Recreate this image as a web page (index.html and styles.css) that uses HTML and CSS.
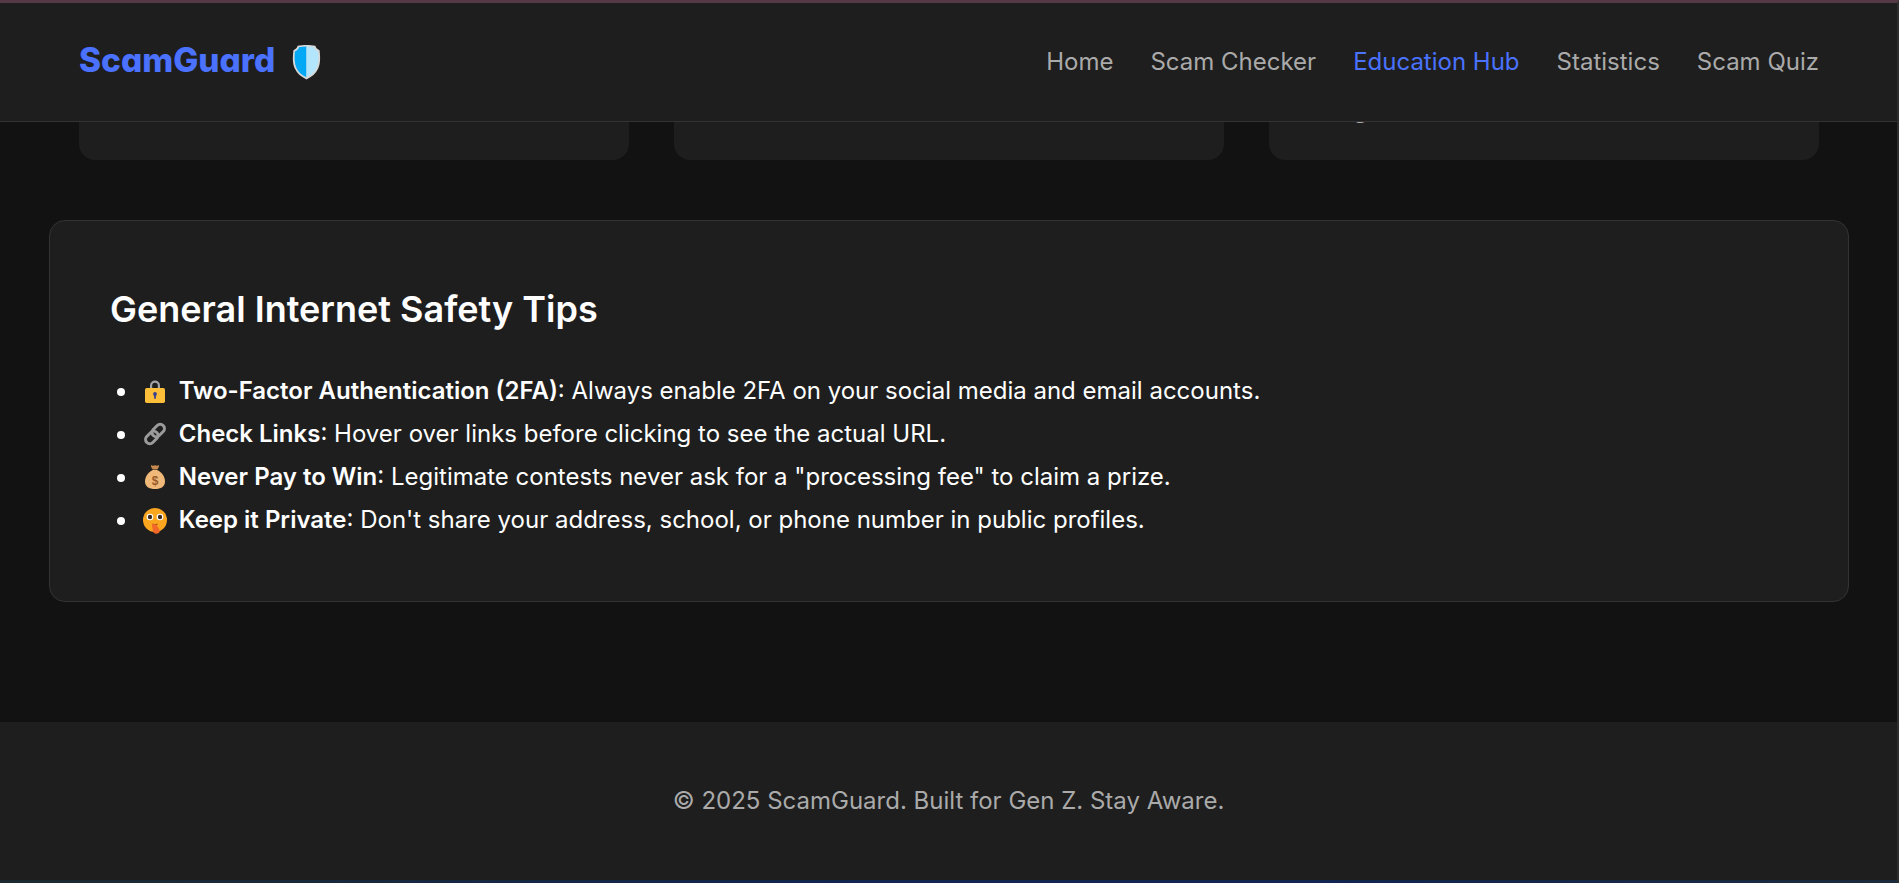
FILE: index.html
```html
<!DOCTYPE html>
<html lang="en">
  <head>
    <meta charset="UTF-8" />
    <meta name="viewport" content="width=device-width, initial-scale=1.0" />
    <title>ScamGuard - Education Hub</title>
    <link rel="stylesheet" href="styles.css">
  </head>

  <body>
    <header class="site-header">
      <div class="logo">
        <span class="logo-text">ScamGuard</span>
        <svg class="logo-shield" viewBox="0 0 30 36">
          <path d="M15 .3c3.200 0 6.500 .4 9.200 1 .3 2 1.800 3.600 4.300 4.500 1 8 .9 14-1.400 19C24.800 30 20.500 33.500 15 36 9.500 33.500 5.200 30 2.900 24.800.6 19.800 .5 13.800 1.500 5.800 4 4.900 5.500 3.300 5.800 1.300c2.700-.6 6-1 9.200-1z" fill="#d8d8d8"/>
          <path d="M15 2c-2.800 0-5.500 .3-7.800 .8C6.700 4.900 5.200 6.300 3 7.100 2.300 14 2.600 19.700 4.600 24.100 6.600 28.400 10.200 31.500 15 33.800z" fill="#03a9f4"/>
          <path d="M15 2c2.800 0 5.500 .3 7.800 .8 .5 2.100 2 3.500 4.200 4.300 .7 6.900 .4 12.600-1.600 17-2 4.300-5.600 7.400-10.400 9.700z" fill="#b3e5fc"/>
        </svg>
      </div>
      <nav class="site-nav">
        <a href="#">Home</a>
        <a href="#">Scam Checker</a>
        <a href="#" class="active">Education Hub</a>
        <a href="#">Statistics</a>
        <a href="#">Scam Quiz</a>
      </nav>
    </header>

    <main>
      <div class="card-row">
        <div class="topic-card"></div>
        <div class="topic-card"></div>
        <div class="topic-card"><p class="topic-text">g</p></div>
      </div>

      <section class="tips">
        <h2>General Internet Safety Tips</h2>
        <ul>
          <li>
            <svg class="emoji" viewBox="0 0 24 24">
              <path d="M7 11V6.500a5 5 0 0 1 10 0V11h-2.200V6.500a2.800 2.800 0 0 0-5.600 0V11z" fill="#a0a4a8"/>
              <rect x="2" y="9" width="20" height="15" rx="1.800" fill="#fdbf3a"/>
              <circle cx="12" cy="15" r="1.900" fill="#3b3f8f"/>
              <rect x="11.100" y="15" width="1.800" height="5" rx=".9" fill="#3b3f8f"/>
            </svg>
            <strong>Two-Factor Authentication (2FA)</strong>: Always enable 2FA on your social media and email accounts.
          </li>
          <li>
            <svg class="emoji" viewBox="0 0 24 24">
              <g fill="none" stroke="#9b9b9b" stroke-width="3">
                <rect x="11" y="1.500" width="8.500" height="14" rx="4.200" transform="rotate(45 15.200 8.500)"/>
                <rect x="4.500" y="8.500" width="8.500" height="14" rx="4.200" transform="rotate(45 8.800 15.500)"/>
              </g>
            </svg>
            <strong>Check Links</strong>: Hover over links before clicking to see the actual URL.
          </li>
          <li>
            <svg class="emoji" viewBox="0 0 24 24">
              <path d="M8 0c1.300 .9 2.500 .9 4 .3 1.500 .6 2.700 .6 4-.3 .3 1.800-.8 3.500-2 4.600h-4C8.800 3.500 7.700 1.800 8 0z" fill="#c68a4e"/>
              <path d="M9.800 5h4.400c5 2.500 7.800 7 7.800 11.500 0 5-4 7.500-10 7.500S2 21.500 2 16.500C2 12 4.800 7.500 9.800 5z" fill="#f0b97a"/>
              <text class="emoji-dollar" x="12" y="20" text-anchor="middle">$</text>
            </svg>
            <strong>Never Pay to Win</strong>: Legitimate contests never ask for a "processing fee" to claim a prize.
          </li>
          <li>
            <svg class="emoji emoji-tall" viewBox="0 0 24 26">
              <circle cx="12" cy="12" r="12" fill="#fba61f"/>
              <circle cx="7" cy="9" r="3.300" fill="#fff"/>
              <circle cx="17" cy="9" r="3.300" fill="#fff"/>
              <circle cx="7" cy="9" r="2.200" fill="#3d2a1c"/>
              <circle cx="17" cy="9" r="2.200" fill="#3d2a1c"/>
              <path d="M9.500 16c1.500 .8 3.500 .8 5 0" fill="none" stroke="#8a4a14" stroke-width="1.200"/>
              <path d="M8.800 16.500c1.500-.8 3.500-.8 4.500 .2l3 4.800c1 2.300-.3 4-2.500 4.300-2.300 .2-4-1.300-4-3.500z" fill="#f2682a"/>
            </svg>
            <strong>Keep it Private</strong>: Don't share your address, school, or phone number in public profiles.
          </li>
        </ul>
      </section>
    </main>

    <footer class="site-footer">
      <p>&copy; 2025 ScamGuard. Built for Gen Z. Stay Aware.</p>
    </footer>
    <div class="bottom-strip"></div>
  </body>
</html>
```

FILE: styles.css
```css
* {
  box-sizing: border-box;
}

html,
body {
  height: 883px;
  overflow: hidden;
}

body {
  margin: 0;
  font-family: Inter, Arial, sans-serif;
  line-height: 1.6;
  background-color: #121212;
  color: #fff;
  display: flex;
  flex-direction: column;
  border-top: 3px solid #553a45;
  border-right: 2px solid #2e2e2e;
}

.site-header {
  height: 119px;
  padding: 0 78px 0 79px;
  display: flex;
  justify-content: space-between;
  align-items: center;
  background-color: #1e1e1e;
  border-bottom: 1px solid #333;
}

.logo {
  display: flex;
  align-items: center;
  gap: 17px;
}

.logo-text {
  margin-top: -2px;
  font-size: 33.400px;
  font-weight: 800;
  font-feature-settings: "cv11" 1;
  color: #4a72ff;
}

.logo-shield {
  width: 29px;
  height: 36px;
}

.site-nav {
  display: flex;
  gap: 37px;
}

.site-nav a {
  color: #aaa;
  font-size: 24px;
  text-decoration: none;
}

.site-nav a.active {
  color: #4a72ff;
}

.card-row {
  display: grid;
  grid-template-columns: repeat(3, 1fr);
  gap: 45px;
  padding: 0 78px 0 79px;
}

.topic-card {
  height: 38px;
  background-color: #1e1e1e;
  border-radius: 0 0 16px 16px;
  overflow: hidden;
}

.topic-text {
  margin: -31px 0 0 84px;
  color: #aaa;
  font-size: 24px;
}

.tips {
  margin: 60px 48px 0 49px;
  height: 382px;
  padding: 60px;
  background-color: #1e1e1e;
  border: 1px solid #333;
  border-radius: 16px;
}

.tips h2 {
  margin: 0 0 30px;
  font-size: 36px;
  font-weight: 600;
}

.tips ul {
  margin: 0;
  padding-left: 29px;
}

.tips li {
  padding-left: 4px;
  font-size: 24px;
  line-height: 43.200px;
}

.tips strong {
  font-weight: 600;
}

.emoji {
  width: 24px;
  height: 24px;
  margin-right: 5px;
  vertical-align: -4px;
}

.emoji-tall {
  height: 26px;
  vertical-align: -6px;
}

.emoji-dollar {
  font-family: "Liberation Sans", sans-serif;
  font-size: 12px;
  font-weight: 700;
  fill: #9a5b2a;
}

.site-footer {
  margin-top: auto;
  height: 158px;
  display: flex;
  justify-content: center;
  align-items: center;
  background-color: #1e1e1e;
}

.site-footer p {
  margin: 0;
  color: #aaa;
  font-size: 24px;
}

.bottom-strip {
  height: 3px;
  background: linear-gradient(to right, #1c2a30, #10254f 45%, #10254f 70%, #1b2a3c);
}
```
